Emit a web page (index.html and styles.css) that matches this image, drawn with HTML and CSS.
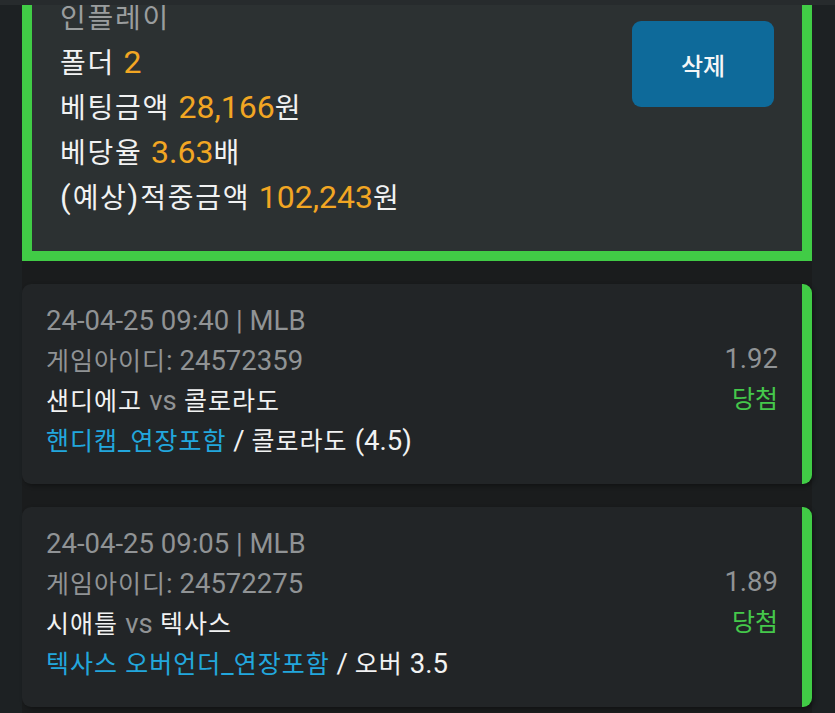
FILE: index.html
```html
<!DOCTYPE html>
<html lang="ko">
<head>
<meta charset="utf-8">
<title>베팅내역</title>
<link rel="stylesheet" href="styles.css">
</head>
<body>
<div class="topbar"></div>
<div class="page">
  <main class="column">
    <section class="summary">
      <div class="summary-info">
        <div class="muted">인플레이</div>
        <div>폴더 <span class="num">2</span></div>
        <div>베팅금액 <span class="num">28,166</span>원</div>
        <div>베당율 <span class="num">3.63</span>배</div>
        <div><span class="lat">(</span>예상<span class="lat">)</span>적중금액 <span class="num">102,243</span>원</div>
      </div>
      <button class="delete" type="button">삭제</button>
    </section>

    <article class="bet">
      <div class="bet-info">
        <div class="muted"><span class="en">24-04-25 09:40 | MLB</span></div>
        <div class="muted">게임아이디<span class="en">: 24572359</span></div>
        <div>샌디에고 <span class="en muted">vs</span> 콜로라도</div>
        <div><span class="market">핸디캡<span class="en">_</span>연장포함</span><span class="en"> / </span>콜로라도 <span class="en">(4.5)</span></div>
      </div>
      <div class="bet-result">
        <div class="muted"><span class="en">1.92</span></div>
        <div class="win">당첨</div>
      </div>
    </article>

    <article class="bet">
      <div class="bet-info">
        <div class="muted"><span class="en">24-04-25 09:05 | MLB</span></div>
        <div class="muted">게임아이디<span class="en">: 24572275</span></div>
        <div>시애틀 <span class="en muted">vs</span> 텍사스</div>
        <div><span class="market">텍사스 오버언더<span class="en">_</span>연장포함</span><span class="en"> / </span>오버 <span class="en">3.5</span></div>
      </div>
      <div class="bet-result">
        <div class="muted"><span class="en">1.89</span></div>
        <div class="win">당첨</div>
      </div>
    </article>
  </main>
</div>
</body>
</html>
```

FILE: styles.css
```css
* { box-sizing: border-box; }

html, body {
  margin: 0;
  padding: 0;
  height: 100%;
}

body {
  background: #1d2123;
  color: #f1f2f2;
  font-family: Roboto, "Noto Sans CJK KR", "Noto Sans", sans-serif;
  overflow: hidden;
}

.topbar {
  height: 5px;
  background: #272b2d;
}

.page {
  display: flex;
  padding: 0 23px 0 22px;
  height: calc(100% - 5px);
}

.column {
  flex: 1;
  background: #1a1c1d;
  display: flex;
  flex-direction: column;
  gap: 23px;
}

.summary {
  height: 256px;
  background: #2c3132;
  border: 10px solid #41cc46;
  border-top: 0;
  padding: 0 28px;
  display: flex;
  justify-content: space-between;
  overflow: hidden;
  flex-shrink: 0;
}

.summary-info {
  margin-top: -9px;
  font-size: 28px;
  line-height: 45px;
  letter-spacing: 1.7px;
}

.muted { color: #909395; }
.summary-info .muted { color: #9a9d9e; }

.num {
  color: #f2a623;
  font-size: 32px;
  line-height: 1;
  letter-spacing: 0;
}

.lat {
  font-size: 31px;
  line-height: 1;
  letter-spacing: 2px;
}

.delete {
  margin-top: 16px;
  width: 142px;
  height: 86px;
  border: 0;
  border-radius: 9px;
  background: #0e6a9a;
  color: #f4f6f7;
  font-family: Roboto, "Noto Sans CJK KR", sans-serif;
  font-size: 24px;
  font-weight: 500;
  padding: 0;
}

.bet {
  height: 200px;
  flex-shrink: 0;
  background: #222527;
  border-radius: 9px;
  border-right: 10px solid #41cc46;
  padding: 18px 24px 0 24px;
  display: flex;
  justify-content: space-between;
  box-shadow: 2px 2px 4px rgba(0, 0, 0, 0.35);
  font-size: 25px;
  line-height: 40px;
}

.bet-info { letter-spacing: 1px; }

.en {
  font-size: 27.5px;
  line-height: 1;
  letter-spacing: 0;
}

.market { color: #22a7dd; }

.bet-result {
  align-self: center;
  margin-bottom: 26px;
  text-align: right;
  letter-spacing: 0;
}

.win { color: #45c84b; }
```
